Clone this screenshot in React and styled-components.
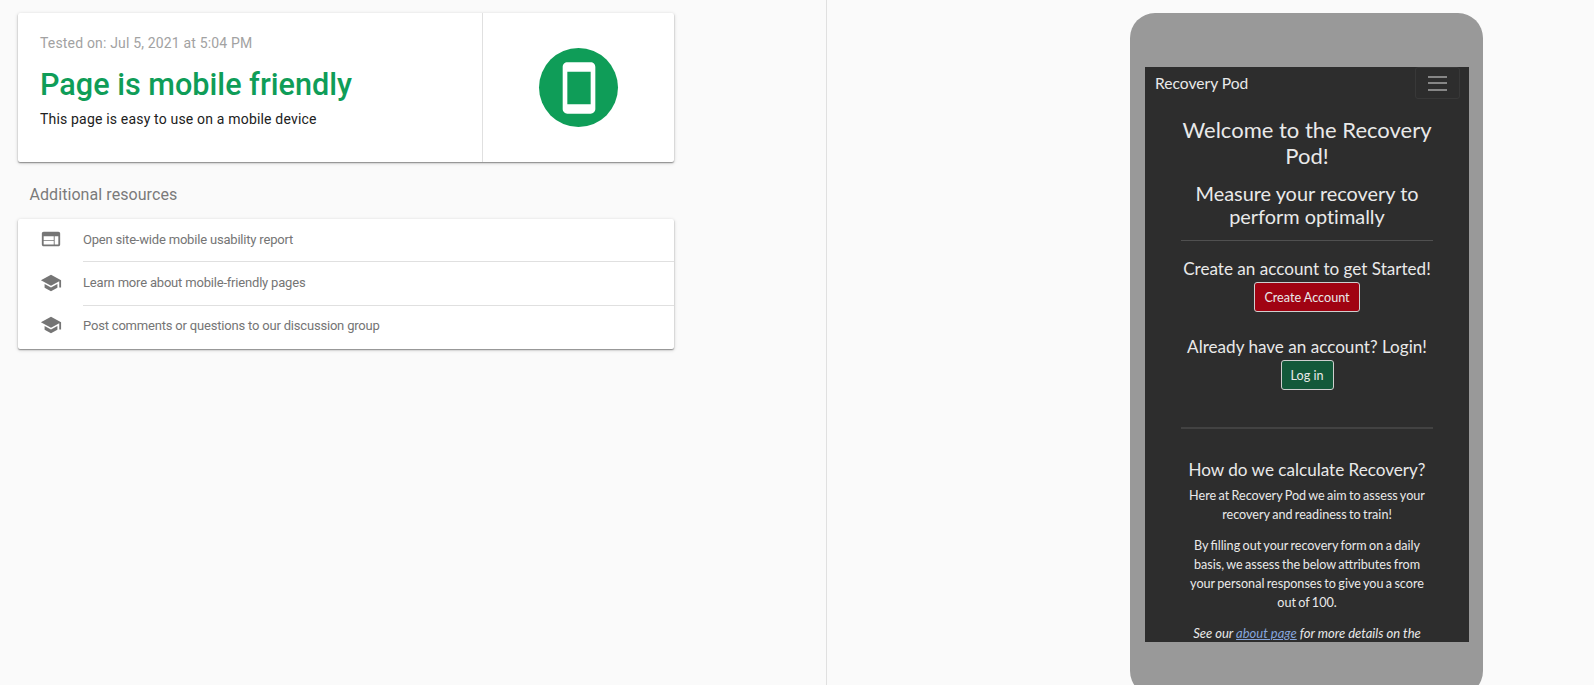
import React from "react";
import styled, { createGlobalStyle } from "styled-components";
import { MdWeb, MdSchool, MdStayCurrentPortrait } from "react-icons/md";

const GlobalStyle = createGlobalStyle`
  * { box-sizing: border-box; }
  html, body { margin: 0; height: 100%; overflow: hidden; background: #fafafa; }
  body { font-family: Roboto, sans-serif; }
`;

const Page = styled.div`
  display: flex;
  height: 685px;
  overflow: hidden;
  background: #fafafa;
`;

const Results = styled.main`
  width: 827px;
  flex: none;
  padding: 13px 0 0 18px;
  border-right: 1px solid #e0e0e0;
`;

const Card = styled.section`
  width: 656px;
  background: #fff;
  border-radius: 2px;
  box-shadow: 0 1px 4px rgba(0, 0, 0, 0.14), 0 1px 1.5px rgba(0, 0, 0, 0.42);
`;

const VerdictCard = styled(Card)`
  display: flex;
  height: 149px;
`;

const VerdictText = styled.div`
  width: 465px;
  flex: none;
  padding: 20px 22px 0;
  border-right: 1px solid #e0e0e0;
  white-space: nowrap;
`;

const TestedOn = styled.div`
  font-size: 14px;
  line-height: 20px;
  letter-spacing: 0.17px;
  color: #a2a2a2;
`;

const Verdict = styled.h1`
  margin: 12px 0 0;
  font-size: 30.6px;
  font-weight: 500;
  line-height: 40px;
  color: #0f9d58;
`;

const Explanation = styled.p`
  margin: 4px 0 0;
  font-size: 14px;
  line-height: 20px;
  letter-spacing: 0.18px;
  color: #212121;
`;

const VerdictBadge = styled.div`
  flex: 1;
  display: flex;
  align-items: center;
  justify-content: center;
`;

const Circle = styled.div`
  display: flex;
  align-items: center;
  justify-content: center;
  width: 79px;
  height: 79px;
  border-radius: 50%;
  background: #0f9d58;
  color: #fff;
`;

const SectionTitle = styled.h2`
  margin: 21px 0 0 11.5px;
  padding-bottom: 12px;
  font-size: 16px;
  font-weight: 400;
  line-height: 24px;
  letter-spacing: 0.07px;
  color: #7a7a7a;
`;

const Resource = styled.a`
  display: flex;
  align-items: center;
  height: ${(p) => p.$height}px;
  padding-left: 22px;
  color: #757575;

  svg {
    margin-bottom: ${(p) => p.$lift + 1}px;
  }
`;

const ResourceLabel = styled.span`
  flex: 1;
  display: flex;
  align-items: center;
  height: 100%;
  margin-left: 21px;
  padding-bottom: ${(p) => p.$lift}px;
  font-size: 13px;
  letter-spacing: -0.19px;
  border-bottom: ${(p) => (p.$last ? "none" : "1px solid #e0e0e0")};
`;

const Preview = styled.aside`
  flex: 1;
  padding: 13px 0 0 303px;
`;

const Phone = styled.div`
  width: 353px;
  height: 683px;
  padding: 54px 14px 54px 15px;
  border-radius: 25px;
  background: #999;
`;

const Screen = styled.div`
  height: 575px;
  overflow: hidden;
  background: #2d2d2d;
  color: #e9e9e9;
  font-family: Lato, sans-serif;
`;

const NavBar = styled.nav`
  display: flex;
  align-items: flex-start;
  justify-content: space-between;
  height: 32px;
  padding: 0 9px 0 10px;
`;

const Brand = styled.span`
  font-size: 15.6px;
  line-height: 32px;
`;

const MenuButton = styled.div`
  display: flex;
  flex-direction: column;
  align-items: center;
  justify-content: center;
  gap: 4.5px;
  width: 45px;
  height: 32px;
  border: 1px solid #383838;
  border-radius: 3px;
`;

const MenuBar = styled.span`
  width: 19px;
  height: 2px;
  background: #868686;
`;

const Content = styled.div`
  display: flex;
  flex-direction: column;
  align-items: center;
  padding: 0 36px;
  text-align: center;
  white-space: nowrap;
`;

const Heading = styled.h2`
  margin: ${(p) => p.$top}px 0 0;
  font-size: ${(p) => p.$size}px;
  font-weight: 400;
  font-variant-ligatures: none;
  line-height: ${(p) => p.$line}px;
`;

const Rule = styled.hr`
  align-self: stretch;
  height: ${(p) => p.$thickness}px;
  margin: ${(p) => p.$top}px 0 0;
  border: 0;
  background: ${(p) => p.$color};
`;

const PodButton = styled.span`
  display: flex;
  align-items: center;
  justify-content: center;
  width: ${(p) => p.$width}px;
  height: 30px;
  margin-top: 2.5px;
  padding-top: 1px;
  border: 1px solid #cfcfcf;
  border-radius: 3px;
  background: ${(p) => p.$color};
  font-size: 12.6px;
`;

const Paragraph = styled.p`
  margin: ${(p) => p.$top}px 0 0;
  font-size: ${(p) => (p.$italic ? 13 : 12.6)}px;
  line-height: 18.9px;
  font-style: ${(p) => (p.$italic ? "italic" : "normal")};
  word-spacing: ${(p) => (p.$italic ? 0 : -0.85)}px;
`;

const Link = styled.a`
  color: #86a5dc;
  text-decoration: underline;
`;

const resources = [
  { icon: MdWeb, label: "Open site-wide mobile usability report", height: 43, lift: 2 },
  { icon: MdSchool, label: "Learn more about mobile-friendly pages", height: 44, lift: 2 },
  { icon: MdSchool, label: "Post comments or questions to our discussion group", height: 43, lift: 4 },
];

export default function App() {
  return (
    <Page>
      <GlobalStyle />
      <Results>
        <VerdictCard>
          <VerdictText>
            <TestedOn>Tested on: Jul 5, 2021 at 5:04 PM</TestedOn>
            <Verdict>Page is mobile friendly</Verdict>
            <Explanation>This page is easy to use on a mobile device</Explanation>
          </VerdictText>
          <VerdictBadge>
            <Circle>
              <MdStayCurrentPortrait size={56} />
            </Circle>
          </VerdictBadge>
        </VerdictCard>
        <SectionTitle>Additional resources</SectionTitle>
        <Card>
          {resources.map(({ icon: Icon, label, height, lift }, i) => (
            <Resource key={label} $height={height} $lift={lift}>
              <Icon size={22} />
              <ResourceLabel $lift={lift} $last={i === resources.length - 1}>{label}</ResourceLabel>
            </Resource>
          ))}
        </Card>
      </Results>
      <Preview>
        <Phone>
          <Screen>
            <NavBar>
              <Brand>Recovery Pod</Brand>
              <MenuButton>
                <MenuBar />
                <MenuBar />
                <MenuBar />
              </MenuButton>
            </NavBar>
            <Content>
              <Heading $top={18} $size={22} $line={25.6}>
                Welcome to the Recovery<br />Pod!
              </Heading>
              <Heading $top={13.8} $size={19.9} $line={22.6}>
                Measure your recovery to<br />perform optimally
              </Heading>
              <Rule $top={12.8} $thickness={1} $color="#505050" />
              <Heading $top={18} $size={17.1} $line={20.4}>Create an account to get Started!</Heading>
              <PodButton $width={106} $color="#a00312">Create Account</PodButton>
              <Heading $top={25} $size={17.1} $line={20.4}>Already have an account? Login!</Heading>
              <PodButton $width={53} $color="#13593a">Log in</PodButton>
              <Rule $top={36.8} $thickness={2} $color="#424242" />
              <Heading $top={31.2} $size={17.1} $line={20.4}>How do we calculate Recovery?</Heading>
              <Paragraph $top={6.7}>
                Here at Recovery Pod we aim to assess your<br />recovery and readiness to train!
              </Paragraph>
              <Paragraph $top={12.3}>
                By filling out your recovery form on a daily<br />
                basis, we assess the below attributes from<br />
                your personal responses to give you a score<br />
                out of 100.
              </Paragraph>
              <Paragraph $top={11.5} $italic>
                See our <Link>about page</Link> for more details on the
              </Paragraph>
            </Content>
          </Screen>
        </Phone>
      </Preview>
    </Page>
  );
}
